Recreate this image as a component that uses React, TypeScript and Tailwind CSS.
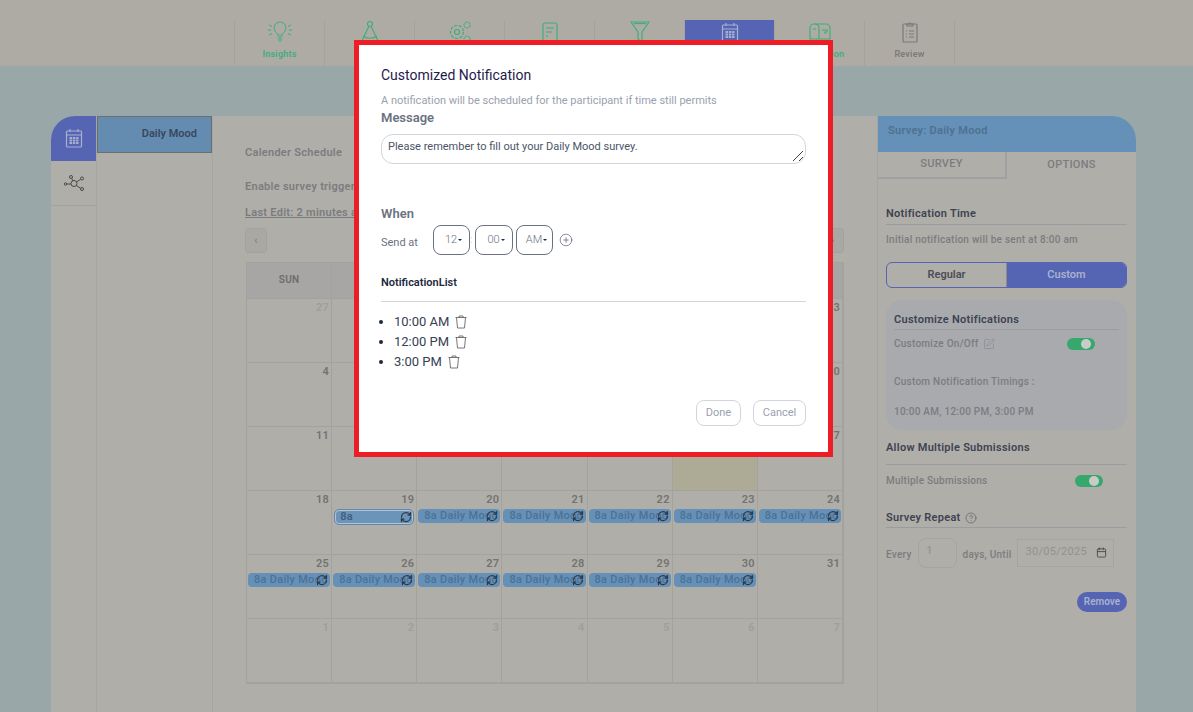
import { ReactNode } from 'react';
import { Calendar, CirclePlus, CircleHelp, RefreshCw, SquarePen } from 'lucide-react';

const green = '#3fae78';

function Bulb() {
  return (
    <svg width="24" height="22" viewBox="0 0 24 22" fill="none" stroke={green} strokeWidth="1">
      <path d="M12 1a6 6 0 0 0-3.5 10.8c.7.6 1 1.3 1 2.2h5c0-.9.3-1.600 1-2.200A6 6 0 0 0 12 1z" />
      <path d="M9.800 16h4.400M9.800 18h4.400M10.500 20h3M1 4l3 1.500M1 14l3-1.500M23 4l-3 1.500M23 14l-3-1.500M0 9h3M21 9h3" />
    </svg>
  );
}

function Compass() {
  return (
    <svg width="22" height="24" viewBox="0 0 22 24" fill="none" stroke={green} strokeWidth="1.200">
      <circle cx="11" cy="4" r="2.500" />
      <path d="M9.800 6.500 2 23M12.200 6.500 20 23M4 16c4 3 10 3 14 0" />
    </svg>
  );
}

function Gears() {
  return (
    <svg width="24" height="24" viewBox="0 0 24 24" fill="none" stroke={green} strokeWidth="1.200">
      <circle cx="9" cy="12" r="2.500" />
      <circle cx="9" cy="12" r="6.500" strokeDasharray="3 1.500" />
      <circle cx="19" cy="5" r="3" strokeDasharray="2 1" />
      <circle cx="19" cy="19" r="3" strokeDasharray="2 1" />
    </svg>
  );
}

function Doc() {
  return (
    <svg width="18" height="20" viewBox="0 0 18 20" fill="none" stroke={green} strokeWidth="1.200">
      <rect x="2" y="1" width="14" height="18" rx="2" />
      <path d="M5 6h8M5 10h6M5 14h2" />
    </svg>
  );
}

function Funnel() {
  return (
    <svg width="20" height="24" viewBox="0 0 20 24" fill="none" stroke={green} strokeWidth="1.200">
      <path d="M1 2h18l-7 10v10l-4-3v-7z" />
      <path d="M4 3.500h12" />
    </svg>
  );
}

function CalendarGrid({ color }: { color: string }) {
  return (
    <svg width="18" height="20" viewBox="0 0 18 20" fill="none" stroke={color} strokeWidth="1.200">
      <rect x="1.500" y="3" width="15" height="16" rx="1" />
      <path d="M5 1v3M13 1v3M1.500 7h15" />
      <path d="M4.500 10h9M4.500 12.500h9M4.500 15h9" strokeWidth="2" strokeDasharray="2.500 .8" />
    </svg>
  );
}

function Mailbox() {
  return (
    <svg width="22" height="20" viewBox="0 0 22 20" fill="none" stroke={green} strokeWidth="1.200">
      <path d="M6 2h11a4 4 0 0 1 4 4v11H1V6a4 4 0 0 1 4-4z" />
      <path d="M10 17V6a4 4 0 0 0-4-4M4 7h3M13 8h5v2h-2v2" />
    </svg>
  );
}

function Clipboard() {
  return (
    <svg width="18" height="22" viewBox="0 0 18 22" fill="none" stroke="#7b7a78" strokeWidth="1.200">
      <rect x="2" y="3" width="14" height="18" rx="1" />
      <path d="M6 3h2a1 1 0 0 1 2 0h2v2H6zM5 10h1M8 10h5M5 13h1M8 13h5M5 16h1M8 16h5" />
    </svg>
  );
}

function Network() {
  return (
    <svg width="20" height="16" viewBox="0 0 20 16" fill="none" stroke="#4a4a4a" strokeWidth="1">
      <circle cx="10" cy="8.500" r="3" />
      <circle cx="7" cy="2" r="1.500" />
      <circle cx="18" cy="3.500" r="1.500" />
      <circle cx="1.500" cy="9" r="1.200" />
      <circle cx="18" cy="14" r="1.500" />
      <path d="M7.700 3.300 9 6M16.600 4.300 12.500 7M2.700 9H7M12.300 10.500l4.400 2.800" />
    </svg>
  );
}

function Trash() {
  return (
    <svg width="12" height="14" viewBox="0 0 12 14" fill="none" stroke="#666" strokeWidth=".9">
      <path d="M.5 2.500h11M4 2.500V1h4v1.500M1.500 2.500l1 10.500h7l1-10.500" />
    </svg>
  );
}

function NavItem({ label, icon, active, muted }: { label: string; icon: ReactNode; active?: boolean; muted?: boolean }) {
  return (
    <div className={`flex w-[90px] flex-col items-center border-r border-[#a6a39d] ${active ? 'bg-[#5565b3]' : ''}`}>
      <div className="flex h-6 items-center">{icon}</div>
      <span className={`mt-1 text-[9px] font-semibold tracking-wide ${muted ? 'text-[#7b7a78]' : 'text-[#3fae78]'}`}>{label}</span>
    </div>
  );
}

function Toggle() {
  return (
    <div className="flex h-3 w-7 items-center justify-end rounded-full bg-[#36a86e] pr-1">
      <div className="size-2.5 rounded-full bg-[#c9cbc9]" />
    </div>
  );
}

function Event({ selected }: { selected?: boolean }) {
  if (selected) {
    return (
      <div className="relative mx-[3px] mt-0.5 h-3.5 rounded-sm border border-[#b3c3d3] bg-[#6a94b9] pl-1 text-[11px] leading-3 text-[#41617f] outline outline-[#5f88ad]">
        8a
        <RefreshCw size={12} strokeWidth={2.500} className="absolute right-0 top-0 text-[#2b3947]" />
      </div>
    );
  }
  return (
    <div className="relative mx-px mt-px h-3.5 overflow-hidden rounded-sm bg-[#6591b8] pl-1.5 text-[11px] leading-3.5 font-medium tracking-wide whitespace-nowrap text-[#4d7193]">
      8a Daily Mood
      <RefreshCw size={12} strokeWidth={2.500} className="absolute right-0.5 top-px text-[#2b3947]" />
    </div>
  );
}

const days = [
  27, 28, 29, 30, 1, 2, 3, 4, 5, 6, 7, 8, 9, 10, 11, 12, 13, 14, 15, 16, 17, 18, 19, 20, 21, 22, 23, 24, 25, 26, 27,
  28, 29, 30, 31, 1, 2, 3, 4, 5, 6, 7,
];

function CalendarTable() {
  return (
    <div className="ml-px mt-[9px] grid grid-cols-7 border border-[#a3a29f] bg-[#b0aea8]">
      {['SUN', 'MON', 'TUE', 'WED', 'THU', 'FRI', 'SAT'].map((d) => (
        <div key={d} className="flex h-9 items-center justify-center border-r border-b border-[#a3a29f] bg-[#a7a6a4] pb-0.5 text-[10px] font-semibold text-[#6d6d6d]">
          {d}
        </div>
      ))}
      {days.map((d, i) => {
        const faded = i < 4 || i >= 35;
        const hasEvent = (i >= 22 && i <= 27) || (i >= 28 && i <= 33);
        return (
          <div key={i} className={`h-16 border-r border-b border-[#a3a29f] ${i === 19 ? 'bg-[#adaa96]' : ''}`}>
            <div className={`pr-0.5 pt-px text-right text-[11px] leading-4 font-semibold ${faded ? 'text-[#9f9e9a]' : 'text-[#747371]'}`}>{d}</div>
            {hasEvent ? <Event selected={i === 22} /> : null}
          </div>
        );
      })}
    </div>
  );
}

function SelectBox({ value, className }: { value: string; className: string }) {
  return (
    <div className={`flex h-[30px] items-center justify-center gap-px rounded-lg border border-gray-500 pl-1 text-[11px] font-light text-gray-500 ${className}`}>
      {value}
      <span className="border-x-2 border-t-2 border-x-transparent border-t-gray-800" />
    </div>
  );
}

function NotificationModal() {
  return (
    <div className="absolute left-[354px] top-10 h-[417px] w-[479px] border-[5px] border-[#ee1c25] bg-white px-[22px] pt-5">
      <h2 className="text-sm leading-5 text-[#1e1b4b]">Customized Notification</h2>
      <p className="mt-2 text-[11px] leading-4 text-gray-400">A notification will be scheduled for the participant if time still permits</p>
      <div className="mt-px text-[13px] leading-4 font-semibold text-gray-500">Message</div>
      <div className="relative mt-2">
        <textarea
          defaultValue="Please remember to fill out your Daily Mood survey."
          className="block h-[30px] w-full resize-none rounded-xl border border-gray-300 px-1.5 py-1 text-[11px] leading-4 text-gray-600 outline-none"
        />
        <svg width="12" height="12" viewBox="0 0 12 12" stroke="#444" strokeWidth="1" className="absolute bottom-0.5 right-0.5">
          <path d="M1 11 11 1M7 11l4-4" />
        </svg>
      </div>
      <div className="mt-10.5 text-[13px] leading-4 font-semibold text-gray-500">When</div>
      <div className="mt-[3px] flex items-center text-[11px] text-gray-500">
        <span className="mt-1.5 w-[52px]">Send at</span>
        <SelectBox value="12" className="w-[37px]" />
        <span className="w-[5px] text-gray-300">:</span>
        <SelectBox value="00" className="w-[38px]" />
        <SelectBox value="AM" className="ml-[3px] w-[37px]" />
        <CirclePlus size={14} strokeWidth={1} className="ml-1.5 text-gray-700" />
      </div>
      <div className="mt-5 text-[11px] leading-4 font-semibold text-slate-800">NotificationList</div>
      <hr className="mt-2.5 border-gray-300" />
      <ul className="mt-2.5 list-disc pl-[13px] text-[13px] leading-5 text-gray-700 marker:text-gray-800">
        {['10:00 AM', '12:00 PM', '3:00 PM'].map((t) => (
          <li key={t}>
            <div className="flex items-center gap-1.5">
              {t}
              <Trash />
            </div>
          </li>
        ))}
      </ul>
      <div className="mt-7 flex justify-end gap-3 text-[11px] text-gray-400">
        <button className="h-[26px] w-[45px] rounded-lg border border-gray-300">Done</button>
        <button className="h-[26px] w-[53px] rounded-lg border border-gray-300">Cancel</button>
      </div>
    </div>
  );
}

function SectionTitle({ children, className }: { children: ReactNode; className?: string }) {
  return <div className={`border-b border-[#9c9ba0] text-[11px] font-semibold tracking-wide text-[#3d4352] ${className ?? ''}`}>{children}</div>;
}

function OptionsPanel() {
  return (
    <aside className="flex w-[258px] flex-col text-[#7b7c80]">
      <div className="flex h-9 items-center rounded-tr-3xl bg-[#6591b8] pb-1.5 pl-2.5 text-[11px] font-semibold tracking-wide text-[#4f7090]">Survey: Daily Mood</div>
      <div className="flex h-[27px] text-[11px] font-medium tracking-wide">
        <div className="flex w-[129px] items-center justify-center border-r-2 border-b-2 border-[#a0a0a3]">SURVEY</div>
        <div className="flex flex-1 items-center justify-center">OPTIONS</div>
      </div>
      <div className="pl-2 pr-[9px]">
        <SectionTitle className="mt-[27px] pb-px">Notification Time</SectionTitle>
        <p className="mt-2 text-[10px] leading-3.5 font-medium tracking-wide">Initial notification will be sent at 8:00 am</p>
        <div className="mt-[15px] flex h-[26px] overflow-hidden rounded-md border border-[#5565b3] text-[11px] font-semibold">
          <div className="flex w-[120px] items-center justify-center border-r border-[#8c8c8c] pt-0.5 text-[#4b4d57]">Regular</div>
          <div className="flex flex-1 items-center justify-center bg-[#5565b3] pt-0.5 text-[#a9b0cf]">Custom</div>
        </div>
        <div className="mt-3 h-[130px] rounded-2xl bg-[#a8aaae] px-2 pt-3">
          <SectionTitle className="pb-px">Customize Notifications</SectionTitle>
          <div className="mt-1.5 flex items-center text-[10px] font-medium tracking-wide">
            <span>Customize On/Off</span>
            <SquarePen size={12} strokeWidth={1} className="ml-1" />
            <div className="ml-auto mr-6">
              <Toggle />
            </div>
          </div>
          <p className="mt-6 text-[10px] leading-3.5 font-medium tracking-wide">Custom Notification Timings :</p>
          <p className="mt-4 text-[10px] leading-3.5 font-medium tracking-wide">10:00 AM, 12:00 PM, 3:00 PM</p>
        </div>
        <SectionTitle className="mt-2.5 pb-2">Allow Multiple Submissions</SectionTitle>
        <div className="mt-2 flex items-center text-[10px] font-medium tracking-wide">
          <span>Multiple Submissions</span>
          <div className="ml-auto mr-6">
            <Toggle />
          </div>
        </div>
        <SectionTitle className="mt-5.5 flex items-center gap-1">
          Survey Repeat
          <CircleHelp size={12} strokeWidth={1} />
        </SectionTitle>
        <div className="mt-2.5 flex items-center text-[10px] font-medium tracking-wide">
          <span className="pt-1">Every</span>
          <div className="ml-1.5 flex h-[30px] w-[39px] items-center rounded-lg border border-[#a5a4a0] pb-1 pl-2 text-[#92928f]">1</div>
          <span className="ml-1.5 pt-1">days, Until</span>
          <div className="ml-[5px] flex h-7 w-[97px] items-center justify-between border border-[#a5a4a0] pl-2 pr-1.5 text-[11px] font-normal tracking-wide text-[#92928f]">
            30/05/2025
            <Calendar size={11} className="text-[#4d4d4d]" />
          </div>
        </div>
        <div className="mt-6 flex justify-end">
          <button className="h-5 w-[50px] rounded-full bg-[#5565b3] text-[10px] font-semibold text-[#a9b0cf]">Remove</button>
        </div>
      </div>
    </aside>
  );
}

export default function App() {
  return (
    <div className="relative h-[712px] w-full overflow-hidden bg-[#9aa7a8] font-['Roboto','Noto_Sans',sans-serif]">
      <header className="h-[66px] bg-[#aeaba5] pt-5">
        <nav className="ml-[234px] flex h-[46px] border-l border-[#a6a39d]">
          <NavItem label="Insights" icon={<Bulb />} />
          <NavItem label="Project" icon={<Compass />} />
          <NavItem label="Settings" icon={<Gears />} />
          <NavItem label="Surveys" icon={<Doc />} />
          <NavItem label="Filters" icon={<Funnel />} />
          <NavItem label="Schedule" icon={<CalendarGrid color="#a9b0cf" />} active />
          <NavItem label="Distribution" icon={<Mailbox />} />
          <NavItem label="Review" icon={<Clipboard />} muted />
        </nav>
      </header>

      <main className="ml-[51px] mt-[50px] flex h-[596px] w-[1085px] rounded-t-3xl bg-[#b0aea8]">
        <div className="w-[46px] border-r border-[#a7a5a0]">
          <div className="flex h-[45px] items-center justify-center rounded-tl-3xl bg-[#5565b3] pb-0.5">
            <CalendarGrid color="#a9b0cf" />
          </div>
          <div className="flex h-[45px] items-center justify-center border-b border-[#a3a29f]">
            <Network />
          </div>
        </div>
        <div className="w-[115px]">
          <div className="flex h-[37px] items-center justify-end border border-[#6b6f74] bg-[#648cb0] pr-3.5 text-[11px] font-semibold text-[#39475e]">Daily Mood</div>
        </div>
        <section className="flex-1 border-x border-[#a7a5a0] pl-8 pr-[33px] pt-[29px] text-[11px] font-semibold tracking-wide text-[#7b7c80]">
          <div className="leading-4">Calender Schedule</div>
          <div className="mt-[18px] leading-4">Enable survey triggers</div>
          <div className="mt-2.5 leading-4 underline">Last Edit: 2 minutes ago</div>
          <div className="mt-[7px] flex justify-between">
            <div className="flex h-[25px] w-[22px] items-center justify-center rounded-sm border border-[#a3a29f] bg-[#a9a8a5] text-[10px]">‹</div>
            <div className="flex h-[25px] w-[22px] items-center justify-center rounded-sm border border-[#a3a29f] bg-[#a9a8a5] text-[10px]">›</div>
          </div>
          <CalendarTable />
        </section>
        <OptionsPanel />
      </main>

      <NotificationModal />
    </div>
  );
}
